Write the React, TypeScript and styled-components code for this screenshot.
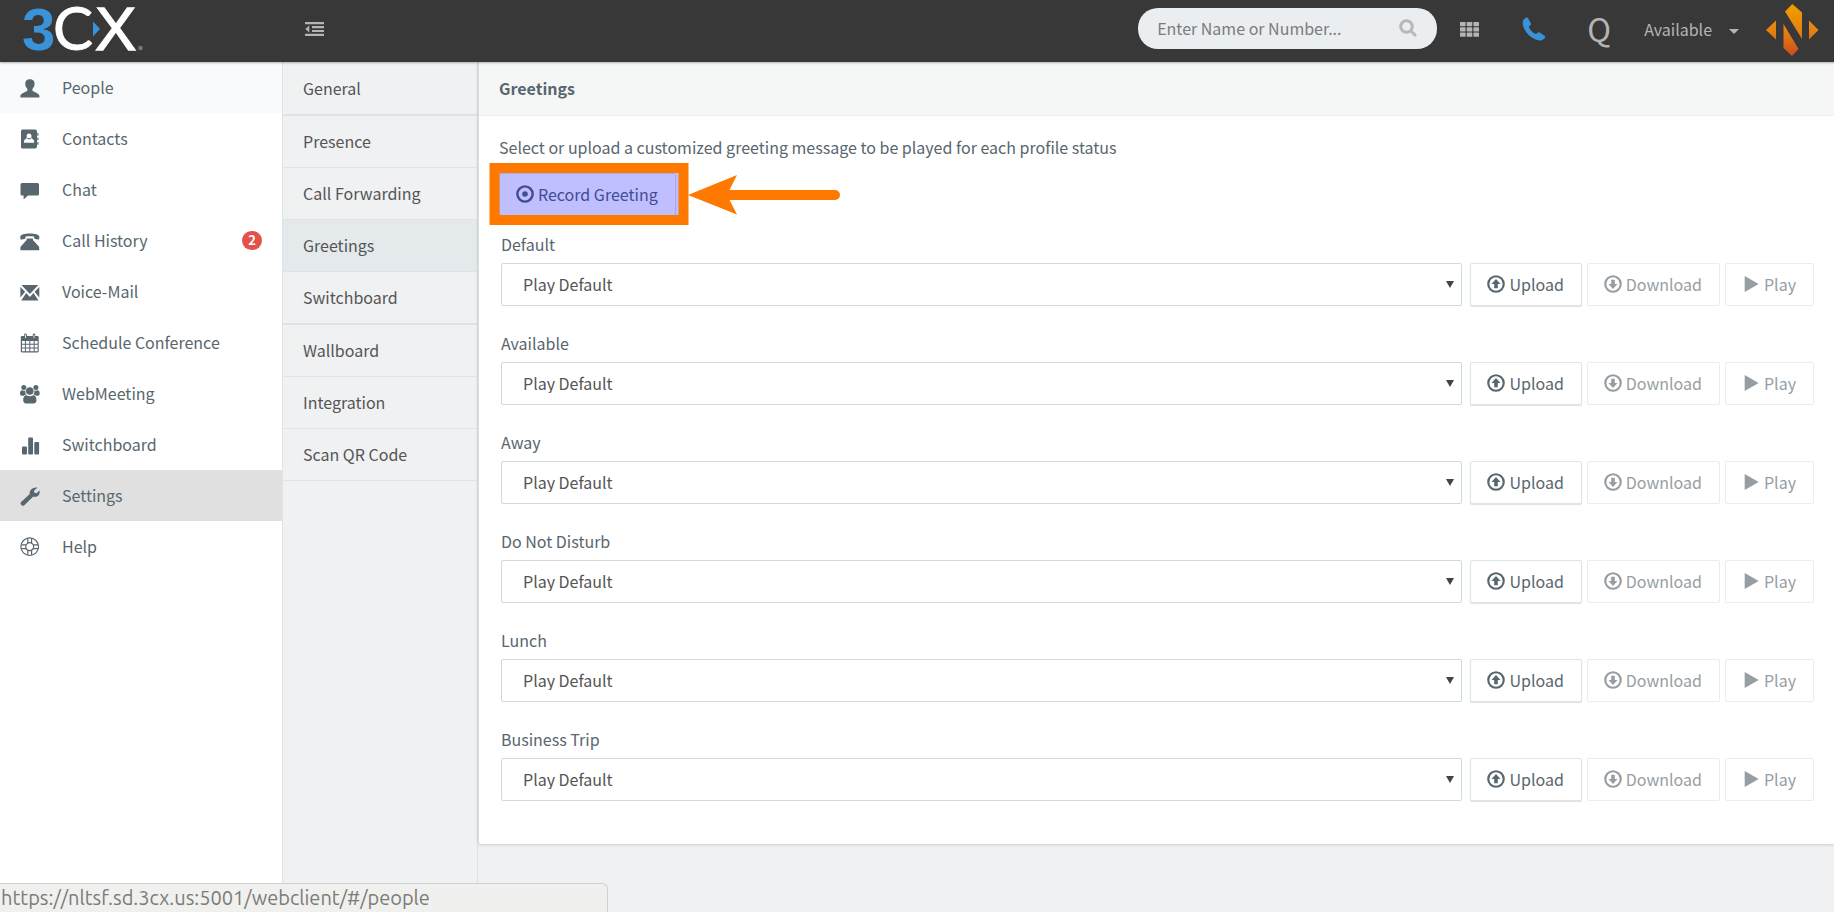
import React from 'react';
import styled, { createGlobalStyle, css } from 'styled-components';

const GlobalStyle = createGlobalStyle`
  *, *::before, *::after { box-sizing: border-box; }
  body {
    margin: 0;
    background: #f0f1f3;
    color: #58666e;
    font-family: "Source Sans Pro", "Noto Sans CJK SC", sans-serif;
    font-size: 16px;
    line-height: 20px;
  }
  button, input, select { font: inherit; color: inherit; }
`;

const Page = styled.div`
  display: flex;
  flex-direction: column;
  min-height: 100vh;
`;

/* ---------- top bar ---------- */

const TopBar = styled.header`
  position: relative;
  z-index: 2;
  display: flex;
  align-items: center;
  height: 62px;
  background: #383838;
  color: #b4b4b4;
  box-shadow: 0 1px 2px rgba(0, 0, 0, 0.3);
`;

const LogoLink = styled.a`
  display: flex;
  flex: 0 0 283px;
  padding-left: 20px;
  svg { overflow: visible; }
`;

const IconButton = styled.button<{ $width: number }>`
  display: flex;
  align-items: center;
  justify-content: center;
  width: ${(p) => p.$width}px;
  height: 62px;
  padding: 0 0 4px;
  border: 0;
  background: none;
`;

const SearchBox = styled.label`
  display: flex;
  align-items: center;
  width: 299px;
  height: 41px;
  margin: 0 0 6px auto;
  padding: 0 20px 0 19px;
  border-radius: 20px;
  background: #eaeef1;
`;

const SearchInput = styled.input`
  flex: 1;
  min-width: 0;
  padding: 0;
  border: 0;
  outline: 0;
  background: none;
  &::placeholder { color: #7c7c7c; opacity: 1; }
`;

const Initial = styled.button`
  width: 66px;
  padding: 0 0 6px;
  border: 0;
  background: none;
  font-size: 32px;
  line-height: 50px;
  color: #b4b4b4;
`;

const StatusButton = styled.button`
  display: flex;
  align-items: center;
  gap: 17px;
  padding: 0 27px 4px 12px;
  border: 0;
  background: none;
  color: #b4b4b4;
`;

const Caret = styled.span`
  margin-top: 5px;
  border: 5px solid transparent;
  border-top-color: currentColor;
  border-bottom: 0;
`;

const Brand = styled.a`
  display: flex;
  padding-right: 15px;
`;

/* ---------- columns ---------- */

const Body = styled.div`
  display: flex;
  flex: 1;
`;

const SideNav = styled.nav`
  flex: 0 0 283px;
  border-right: 1px solid #dee5e7;
  background: #fff;
`;

const SideLink = styled.a<{ $state?: 'hover' | 'active' }>`
  display: flex;
  align-items: center;
  height: 51px;
  padding: 0 20px;
  color: #58666e;
  text-decoration: none;
  ${(p) => p.$state === 'hover' && css`background: #f9fafc;`}
  ${(p) => p.$state === 'active' && css`background: #e0e0e0;`}
`;

const SideText = styled.span`
  flex: 1;
  margin-left: 22px;
  padding-bottom: 2px;
`;

const Badge = styled.span`
  min-width: 20px;
  height: 19px;
  border-radius: 10px;
  background: #e4514b;
  color: #fff;
  font-size: 13px;
  font-weight: 700;
  line-height: 18px;
  text-align: center;
`;

const SubNav = styled.nav`
  flex: 0 0 194px;
  padding-top: 1px;
`;

const SubLink = styled.a<{ $active?: boolean; $groupEnd?: boolean }>`
  display: flex;
  align-items: center;
  height: ${(p) => (p.$groupEnd ? 53 : 52)}px;
  padding: 0 0 2px 20px;
  border-bottom: ${(p) => (p.$groupEnd ? 2 : 1)}px solid #dde3e6;
  background: ${(p) => (p.$active ? '#e4e9eb' : 'transparent')};
  color: #555;
  text-decoration: none;
`;

const Main = styled.main`
  flex: 1;
  min-width: 0;
  border-left: 1px solid #dde1e4;
`;

const Panel = styled.section`
  border-left: 1px solid #d8e0e2;
  border-radius: 0 0 0 3px;
  background: #fff;
  box-shadow: 0 1px 3px rgba(0, 0, 0, 0.15);
`;

const PanelTitle = styled.h1`
  margin: 0;
  padding: 16px 20px 17px;
  border-bottom: 1px solid #eaefef;
  background: #f5f7f7;
  font-size: 16px;
  font-weight: 700;
  line-height: 20px;
`;

const PanelBody = styled.div`
  padding: 21px 20px 43px;
`;

const Intro = styled.p`
  margin: 0 0 16px;
`;

/* ---------- controls ---------- */

const Button = styled.button`
  display: flex;
  align-items: center;
  height: 43px;
  padding: 0 17px 2px 16px;
  gap: 4px;
  border: 1px solid #dee5e7;
  border-radius: 2px;
  background: #fff;
  color: #58666e;
  white-space: nowrap;
  box-shadow: 0 1px 1px rgba(90, 110, 110, 0.2);
  &:disabled { color: #979ea3; border-color: #e8edee; box-shadow: none; }
`;

const RecordRow = styled.div`
  position: relative;
  display: flex;
  margin-bottom: 18px;
`;

const Callout = styled.svg`
  position: absolute;
  left: -10px;
  top: -10px;
  pointer-events: none;
`;

const Groups = styled.div`
  display: grid;
  gap: 27px;
  padding-left: 2px;
`;

const Group = styled.div`
  display: grid;
  gap: 9px;
`;

const Controls = styled.div`
  display: flex;
  gap: 5px;
`;

const SelectWrap = styled.div`
  position: relative;
  flex: 1;
  margin-right: 3px;
  &::after {
    content: "";
    position: absolute;
    right: 8px;
    top: 18px;
    border: 4px solid transparent;
    border-top: 7px solid #444;
    border-bottom: 0;
    pointer-events: none;
  }
`;

const Select = styled.select`
  width: 100%;
  height: 43px;
  padding: 0 21px 1px;
  border: 1px solid #cfdadd;
  border-radius: 2px;
  appearance: none;
  background: #fff;
  color: #555;
`;

const StatusUrl = styled.div`
  position: fixed;
  z-index: 3;
  left: 0;
  bottom: 0;
  width: 608px;
  height: 29px;
  padding-left: 1px;
  border: 1px solid #d0d0d0;
  border-width: 1px 1px 0 0;
  border-radius: 0 6px 0 0;
  background: #f0f0ee;
  color: #7b7b78;
  font-family: Ubuntu, "Noto Sans", sans-serif;
  font-size: 20px;
  line-height: 28px;
`;

/* ---------- drawings ---------- */

const Svg = ({ children, size = 20 }: { children: React.ReactNode; size?: number }) => (
  <svg width={size} height={size} viewBox="0 0 20 20" fill="currentColor" aria-hidden="true">
    {children}
  </svg>
);

const icons: Record<string, React.ReactNode> = {
  people: (
    <path d="M9.800 1.300c3 0 4.900 2 4.800 4.800-.1 2-1.100 3.600-2 4.700-.5.9-.4 1.700.3 2.300 1 .9 6.500 2.600 6.500 4.900v1.500H.4V18c0-2.300 5.500-4 6.500-4.900.7-.6.800-1.400.3-2.300-.9-1.100-1.900-2.700-2-4.700-.1-2.800 1.600-4.800 4.600-4.800Z" />
  ),
  contacts: (
    <>
      <path fillRule="evenodd" d="M2.500.5H15a2 2 0 0 1 2 2v15a2 2 0 0 1-2 2H2.500a1.500 1.500 0 0 1-1.500-1.500V2A1.500 1.500 0 0 1 2.500.5Zm6.600 3.900c-1.600 0-2.600 1.200-2.500 2.700l.3 1.900-2 1.500c-.7.500-1 1.300-1 2.200v1h10.300v-1c0-.9-.3-1.700-1-2.200l-2-1.500.3-1.900c.1-1.500-.8-2.700-2.400-2.700Z" />
      <path d="M17.300 4h.6c.4 0 .6.3.6.600v1.600c0 .4-.2.600-.6.600h-.6Zm0 4.500h.6c.4 0 .6.3.6.600v1.600c0 .4-.2.600-.6.600h-.6Zm0 4.500h.6c.4 0 .6.300.6.600v1.600c0 .4-.2.600-.6.600h-.6Z" />
      <path d="M7.300 9.200h3.600v1H7.300z" />
    </>
  ),
  chat: (
    <path d="M2 3h15.500a1.500 1.500 0 0 1 1.500 1.500V14a1.500 1.500 0 0 1-1.500 1.500H8L3.600 19.500v-4H2A1.500 1.500 0 0 1 .5 14V4.500A1.500 1.500 0 0 1 2 3Z" />
  ),
  history: (
    <>
      <path d="M.3 5.600C.8 3.200 4.200 2.400 9.800 2.400s9 .8 9.500 3.200v1.900c0 .7-.5 1.100-1.200 1l-3-.500c-.7-.1-1-.5-1-1.200V5.600c-1.800-.5-6.800-.5-8.600 0v1.200c0 .7-.3 1.100-1 1.200l-3 .5C.8 8.600.3 8.200.3 7.500Z" />
      <path d="M6.700 7.600h6.200v1.400l5.500 6c.5.600.8 1 .8 1.800v2.500H.4v-2.500c0-.8.3-1.200.8-1.800l5.500-6Z" />
    </>
  ),
  voicemail: (
    <>
      <path d="M1.500 2.900h16.800L9.900 12Z" />
      <path d="M.4 5l4.700 4.800L.4 15.600Zm18.900 0-4.700 4.800 4.700 5.800ZM6.200 11l3.700 3.900L13.500 11l5 7.400H1.200Z" />
    </>
  ),
  calendar: (
    <>
      <path fillRule="evenodd" d="M2 3h15.500c.7 0 1.200.5 1.200 1.200v14c0 .7-.5 1.200-1.200 1.200H2c-.7 0-1.200-.5-1.200-1.200v-14C.8 3.500 1.300 3 2 3Zm0 5v2.700h2.900V8Zm3.900 0v2.700h3.400V8Zm4.400 0v2.700h3.400V8Zm4.400 0v2.700h2.900V8ZM2 11.700v2.700h2.900v-2.700Zm3.900 0v2.700h3.400v-2.700Zm4.400 0v2.700h3.400v-2.700Zm4.400 0v2.700h2.900v-2.700ZM2 15.400v2.900h2.900v-2.900Zm3.900 0v2.900h3.400v-2.900Zm4.400 0v2.900h3.400v-2.900Zm4.400 0v2.900h2.900v-2.900Z" />
      <rect x="4.200" y=".6" width="2.600" height="5.400" rx="1.300" />
      <rect x="12.700" y=".6" width="2.600" height="5.400" rx="1.300" />
      <path stroke="#fff" strokeWidth=".8" strokeLinecap="round" d="M5.500 2.200v2.600M14 2.200v2.600" />
    </>
  ),
  meeting: (
    <>
      <circle cx="3.800" cy="3.500" r="2.500" />
      <circle cx="15.900" cy="3.500" r="2.500" />
      <circle cx="9.800" cy="7" r="3.800" />
      <path d="M1.900 6.300c1.100.6 2.500.6 3.500.1-.3 1.700 0 3 1 4.200-1 0-2 .4-2.700 1.100H2C.8 11.700 0 11 0 9.800c0-1.500.5-3.500 1.900-3.500ZM17.800 6.300c-1.100.6-2.500.6-3.500.1.3 1.700 0 3-1 4.200 1 0 2 .4 2.700 1.100h1.700c1.200 0 2-.7 2-1.900 0-1.500-.5-3.500-1.900-3.500Z" />
      <path d="M6.400 11.300c2.200 1.300 4.700 1.300 6.900 0 2.400 0 3.200 2.800 3.200 5 0 1.900-1.100 3.100-2.900 3.100H6.100c-1.800 0-2.900-1.200-2.900-3.100 0-2.200.8-5 3.200-5Z" />
    </>
  ),
  chart: (
    <>
      <rect x="2" y="11.500" width="5" height="8" rx="1" />
      <rect x="8.200" y="2.500" width="4.800" height="17" rx="1" />
      <rect x="14.300" y="7" width="4.800" height="12.500" rx="1" />
    </>
  ),
  wrench: (
    <path d="M13 2.200c1.600-.8 3.200-.8 4.300-.4L14 4.800l.4 2 2.100.5 3-2.700c.5 2 0 3.700-1.200 4.900-1.500 1.500-3.500 1.700-5 1.100L4.600 18.900a2.300 2.300 0 0 1-3.300.1 2.300 2.300 0 0 1 .1-3.300l8.400-7.800c-.7-2.200.8-4.600 3.200-5.700Z" />
  ),
  help: (
    <g fill="none" stroke="currentColor" strokeWidth="1.200">
      <circle cx="9.700" cy="9.700" r="8.800" />
      <circle cx="9.700" cy="9.700" r="4" />
      <path d="M7.800 1.100v5.100M11.600 1.100v5.100M7.800 13.200v5.100M11.600 13.200v5.100M1.100 7.800h5.100M1.100 11.600h5.100M13.200 7.800h5.100M13.200 11.600h5.100" />
    </g>
  ),
  upload: (
    <>
      <circle cx="10" cy="10" r="8.600" fill="none" stroke="currentColor" strokeWidth="2.400" />
      <path d="M10 4.500 15 10h-3v4.600H8V10H5Z" />
    </>
  ),
  download: (
    <>
      <circle cx="10" cy="10" r="8.600" fill="none" stroke="currentColor" strokeWidth="2.400" />
      <path d="M10 15.500 15 10h-3V5.400H8V10H5Z" />
    </>
  ),
  play: <path d="M3 1v18L18.500 10Z" />,
  record: (
    <>
      <circle cx="10" cy="10" r="8.500" fill="none" stroke="currentColor" strokeWidth="2.700" />
      <circle cx="10" cy="10" r="3.100" />
    </>
  ),
};

const Logo = () => (
  <svg width="125" height="52" viewBox="0 0 125 52" role="img" aria-label="3CX">
    <text x="2" y="45" fontSize="60" fill="#3a92d8" fontFamily="Liberation Sans" fontWeight="700">3</text>
    <text x="33" y="45" fontSize="60" fill="#fff" stroke="#fff" strokeWidth=".8" fontFamily="Lato">C</text>
    <path d="M73 12h5l5 12-5 12h-5Z" fill="#383838" />
    <text x="75" y="45" fontSize="62" fill="#fff" stroke="#fff" strokeWidth="1.400" fontFamily="Liberation Sans">X</text>
    <path d="M73 16.500v15l7-7.500Z" fill="#3a92d8" />
    <circle cx="120.500" cy="43" r="2.300" fill="#777" />
  </svg>
);

const BrandMark = () => (
  <svg width="53" height="56" viewBox="0 0 53 56" role="img" aria-label="Company">
    <defs>
      <linearGradient id="flame" gradientUnits="userSpaceOnUse" x1="0" y1="0" x2="0" y2="54">
        <stop offset=".1" stopColor="#f09a00" />
        <stop offset=".55" stopColor="#e37f12" />
        <stop offset="1" stopColor="#c9481f" />
      </linearGradient>
    </defs>
    <path fill="url(#flame)" d="M0 27 10 17.500v19ZM19 8.500 26.300 1 36 9.500V36ZM17.500 21 32.500 46l-6.500 7-8.500-8ZM43 17.500v19L52.500 27Z" />
  </svg>
);

/* ---------- data ---------- */

const sideItems: { icon: string; text: string; badge?: number; state?: 'hover' | 'active' }[] = [
  { icon: 'people', text: 'People', state: 'hover' },
  { icon: 'contacts', text: 'Contacts' },
  { icon: 'chat', text: 'Chat' },
  { icon: 'history', text: 'Call History', badge: 2 },
  { icon: 'voicemail', text: 'Voice-Mail' },
  { icon: 'calendar', text: 'Schedule Conference' },
  { icon: 'meeting', text: 'WebMeeting' },
  { icon: 'chart', text: 'Switchboard' },
  { icon: 'wrench', text: 'Settings', state: 'active' },
  { icon: 'help', text: 'Help' },
];

const subItems = [
  { text: 'General', groupEnd: true },
  { text: 'Presence' },
  { text: 'Call Forwarding' },
  { text: 'Greetings', active: true },
  { text: 'Switchboard', groupEnd: true },
  { text: 'Wallboard' },
  { text: 'Integration' },
  { text: 'Scan QR Code' },
];

const profiles = ['Default', 'Available', 'Away', 'Do Not Disturb', 'Lunch', 'Business Trip'];

const GreetingRow = ({ name }: { name: string }) => {
  const id = name.toLowerCase().replace(/ /g, '-');
  return (
    <Group>
      <label htmlFor={id}>{name}</label>
      <Controls>
        <SelectWrap>
          <Select id={id}>
            <option>Play Default</option>
          </Select>
        </SelectWrap>
        <Button type="button"><Svg size={18}>{icons.upload}</Svg>Upload</Button>
        <Button type="button" disabled><Svg size={18}>{icons.download}</Svg>Download</Button>
        <Button type="button" disabled><Svg size={18}>{icons.play}</Svg>Play</Button>
      </Controls>
    </Group>
  );
};

export default function App() {
  return (
    <Page>
      <GlobalStyle />
      <TopBar>
        <LogoLink href="#/"><Logo /></LogoLink>
        <IconButton type="button" $width={62} aria-label="Collapse menu">
          <svg width="19" height="14" viewBox="0 0 19 14" fill="#b4b4b4">
            <path d="M0 0h19v2.200H0zM7 4h12v2.200H7zM7 7.900h12v2.200H7zM0 11.800h19V14H0zM.3 7 4.300 3.500v7z" />
          </svg>
        </IconButton>
        <SearchBox>
          <SearchInput type="text" aria-label="Search" placeholder="Enter Name or Number..." />
          <svg width="18" height="18" viewBox="0 0 18 18" fill="none" stroke="#b8b8b8" strokeWidth="3" strokeLinecap="round">
            <circle cx="7.500" cy="7.500" r="5.800" />
            <path d="m12 12 4 4" />
          </svg>
        </SearchBox>
        <IconButton type="button" $width={64} aria-label="Dial pad">
          <svg width="19" height="15" viewBox="0 0 19 15" fill="#b4b4b4">
            {[0, 1, 2].map((r) => [0, 1, 2].map((c) => (
              <rect key={`${r}${c}`} x={c * 6.700} y={r * 5.300} width="5.600" height="4.200" rx=".6" />
            )))}
          </svg>
        </IconButton>
        <IconButton type="button" $width={65} aria-label="Call">
          <svg width="24" height="24" viewBox="0 0 24 24" fill="#3a92d8">
            <path d="M4.200.6c.8-.4 1.500-.2 1.900.6l2.700 5c.4.8.2 1.500-.5 2.100L6.900 9.500c.8 3.200 3.900 6.500 7.200 7.600l1.500-1.400c.6-.6 1.300-.7 2-.2l4.900 3.200c.8.5.9 1.200.5 1.900-1.100 2-3 3-5.100 2.800C9.500 22.500 1.300 14.200.7 6.200.5 3.700 1.700 1.800 4.200.6Z" />
          </svg>
        </IconButton>
        <Initial type="button">Q</Initial>
        <StatusButton type="button">Available<Caret /></StatusButton>
        <Brand href="#/me"><BrandMark /></Brand>
      </TopBar>
      <Body>
        <SideNav>
          {sideItems.map((item) => (
            <SideLink key={item.text} href={`#/${item.icon}`} $state={item.state}>
              <Svg>{icons[item.icon]}</Svg>
              <SideText>{item.text}</SideText>
              {item.badge && <Badge>{item.badge}</Badge>}
            </SideLink>
          ))}
        </SideNav>
        <SubNav>
          {subItems.map((item) => (
            <SubLink key={item.text} href="#/settings" $active={item.active} $groupEnd={item.groupEnd}>
              {item.text}
            </SubLink>
          ))}
        </SubNav>
        <Main>
          <Panel>
            <PanelTitle>Greetings</PanelTitle>
            <PanelBody>
              <Intro>Select or upload a customized greeting message to be played for each profile status</Intro>
              <RecordRow>
                <Button type="button"><Svg size={18}>{icons.record}</Svg>Record Greeting</Button>
                <Callout width="352" height="64" viewBox="0 0 352 64">
                  <rect x="6" y="6" width="189" height="52" fill="#00f" fillOpacity=".25" />
                  <rect x="5.500" y="5" width="189" height="52" fill="none" stroke="#ff7800" strokeWidth="10" />
                  <path d="M230 32h116" stroke="#ff7800" strokeWidth="10" strokeLinecap="round" />
                  <path d="M199 32 248 12 238 32 248 51.500Z" fill="#ff7800" />
                </Callout>
              </RecordRow>
              <Groups>
                {profiles.map((name) => <GreetingRow key={name} name={name} />)}
              </Groups>
            </PanelBody>
          </Panel>
        </Main>
      </Body>
      <StatusUrl>https://nltsf.sd.3cx.us:5001/webclient/#/people</StatusUrl>
    </Page>
  );
}
